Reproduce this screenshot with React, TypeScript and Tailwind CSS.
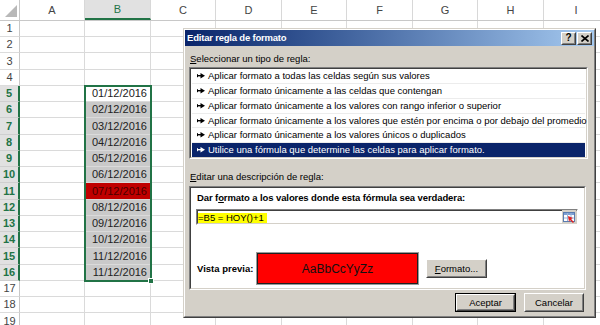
import React from "react";

const cols = ["A", "B", "C", "D", "E", "F", "G", "H", "I"];
const colCls = ["w-[65px]", "w-[66px]", "w-[65px]", "w-[66px]", "w-[65px]", "w-[66px]", "w-[65px]", "w-[66px]", "w-[65px]"];
const rowCls = ["h-[16px]", "h-[16px]", "h-[17px]", "h-[16px]"];

const dates: Record<number, string> = {
  5: "01/12/2016",
  6: "02/12/2016",
  7: "03/12/2016",
  8: "04/12/2016",
  9: "05/12/2016",
  10: "06/12/2016",
  11: "07/12/2016",
  12: "08/12/2016",
  13: "09/12/2016",
  14: "10/12/2016",
  15: "11/12/2016",
  16: "11/12/2016",
};

const items = [
  "Aplicar formato a todas las celdas según sus valores",
  "Aplicar formato únicamente a las celdas que contengan",
  "Aplicar formato únicamente a los valores con rango inferior o superior",
  "Aplicar formato únicamente a los valores que estén por encima o por debajo del promedio",
  "Aplicar formato únicamente a los valores únicos o duplicados",
  "Utilice una fórmula que determine las celdas para aplicar formato.",
];
const itemH = ["h-[15px]", "h-[15px]", "h-[15px]", "h-[14px]", "h-[15px]", "h-[14px]"];

function Arrow() {
  return (
    <svg width="8" height="6" viewBox="0 0 8 6" className="shrink-0">
      <rect x="0" y="2" width="4" height="1.4" fill="currentColor" />
      <rect x="0" y="1.2" width="1" height="3" fill="currentColor" />
      <polygon points="3.5,0 8,2.7 3.5,5.4" fill="currentColor" />
    </svg>
  );
}

function Raised({ className, children }: { className?: string; children?: React.ReactNode }) {
  return (
    <div className={"border border-t-white border-l-white border-r-[#404040] border-b-[#404040] bg-[#d4d0c8] " + (className ?? "")}>
      <div className="w-full h-full border border-t-[#d4d0c8] border-l-[#d4d0c8] border-r-[#808080] border-b-[#808080] flex items-center justify-center">
        {children}
      </div>
    </div>
  );
}

function Sunken({ className, innerClass, children }: { className?: string; innerClass?: string; children?: React.ReactNode }) {
  return (
    <div className={"border border-t-[#808080] border-l-[#808080] border-r-white border-b-white " + (className ?? "")}>
      <div className={"w-full h-full border border-t-[#404040] border-l-[#404040] border-r-[#d4d0c8] border-b-[#d4d0c8] bg-white " + (innerClass ?? "")}>
        {children}
      </div>
    </div>
  );
}

function CollapseIcon() {
  return (
    <svg width="14" height="14" viewBox="0 0 14 14">
      <rect x="0" y="0" width="14" height="14" fill="#d4d0c8" />
      <rect x="1.5" y="2.5" width="11" height="9" fill="#ffffff" stroke="#5a7cb0" strokeWidth="1" />
      <rect x="2" y="3" width="10" height="2" fill="#7b9fd4" />
      <line x1="5.5" y1="3" x2="5.5" y2="11" stroke="#9bb3d8" strokeWidth="1" />
      <line x1="9" y1="3" x2="9" y2="11" stroke="#9bb3d8" strokeWidth="1" />
      <line x1="2" y1="8" x2="12" y2="8" stroke="#9bb3d8" strokeWidth="1" />
      <polygon points="6,6 11,8 9,9 12,12 11,13 8,10 7,12" fill="#e02020" />
    </svg>
  );
}

function Spreadsheet() {
  const rows = Array.from({ length: 19 }, (_, i) => i + 1);
  return (
    <div className="flex flex-col w-[609px]">
      <div className="flex h-[21px] border-b border-[#c8c8c8]">
        <div className="w-[20px] h-full border-r border-[#c8c8c8] relative bg-white">
          <svg width="20" height="20" viewBox="0 0 20 20" className="absolute left-0 top-0">
            <polygon points="17,5 17,17 5,17" fill="#b8b8b8" />
          </svg>
        </div>
        {cols.map((c, i) => (
          <div
            key={c}
            className={
              colCls[i] +
              " h-full flex items-center justify-center border-r border-[#d8d8d8] text-[11px] " +
              (c === "B" ? "bg-[#e1e1e1] text-[#217346] border-b-2 border-b-[#217346]" : "bg-white text-[#444]")
            }
          >
            {c}
          </div>
        ))}
      </div>
      {rows.map((r) => {
        const sel = r >= 5 && r <= 16;
        return (
          <div key={r} className={"flex " + rowCls[(r - 1) % 4]}>
            <div
              className={
                "w-[20px] h-full flex items-center justify-center text-[11px] border-b " +
                (sel
                  ? "bg-[#e1e1e1] text-[#217346] font-bold border-r-2 border-r-[#217346] border-b-[#cfcfcf]"
                  : "bg-white text-[#444] border-r border-r-[#c8c8c8] border-b-[#dcdcdc]")
              }
            >
              {r}
            </div>
            {cols.map((c, i) => {
              const isB = c === "B" && sel;
              let bg = "bg-white";
              let txt = "text-[#222]";
              if (isB && r > 5) bg = "bg-[#c9c9c9]";
              if (isB && r === 11) {
                bg = "bg-[#c00000]";
                txt = "text-[#4a0000]";
              }
              return (
                <div
                  key={c}
                  className={colCls[i] + " h-full border-r border-b border-[#dadada] flex items-center justify-end pr-[3px] text-[11px] " + bg + " " + txt}
                >
                  {isB ? dates[r] : ""}
                </div>
              );
            })}
          </div>
        );
      })}
    </div>
  );
}

function Dialog() {
  return (
    <div className="absolute left-[183px] top-[28px] w-[413px] h-[290px] border border-t-[#d4d0c8] border-l-[#d4d0c8] border-r-[#404040] border-b-[#404040] bg-[#d4d0c8]">
      <div className="w-full h-full border border-t-white border-l-white border-r-[#808080] border-b-[#808080] flex flex-col text-[9.5px] leading-[12px] text-black">
        {/* title bar */}
        <div className="h-[16px] flex items-center bg-gradient-to-r from-[#0a246a] to-[#a6caf0] pl-[2px] pr-[2px]">
          <div className="flex-1 text-white font-bold tracking-[-0.2px]">Editar regla de formato</div>
          <Raised className="w-[15px] h-[13px]">
            <span className="font-bold text-[10px] leading-[10px]">?</span>
          </Raised>
          <Raised className="w-[15px] h-[13px] ml-[1px]">
            <svg width="8" height="7" viewBox="0 0 8 7">
              <path d="M0.5 0.5 L7.5 6.5 M7.5 0.5 L0.5 6.5" stroke="#000" strokeWidth="1.6" />
            </svg>
          </Raised>
        </div>
        {/* body */}
        <div className="flex flex-col pl-[4px] pr-[6px]">
          <div className="mt-[7px] h-[12px] pl-[1px]">
            <span className="underline">S</span>eleccionar un tipo de regla:
          </div>
          <Sunken className="mt-[2px] h-[92px]" innerClass="py-0 px-px">
            <div className="flex flex-col">
              {items.map((t, i) => (
                <div
                  key={i}
                  className={
                    itemH[i] +
                    " flex items-center gap-[3px] pl-[5px] " +
                    (i === 5 ? "bg-[#0a246a] text-white" : "border-b border-[#ececec]")
                  }
                >
                  <Arrow />
                  <span className="whitespace-nowrap">{t}</span>
                </div>
              ))}
            </div>
          </Sunken>
          <div className="mt-[12px] h-[12px] pl-[1px]">
            <span className="underline">E</span>ditar una descripción de regla:
          </div>
          <Sunken className="mt-[3px] h-[104px] w-[397px]" innerClass="flex flex-col pl-[5px] pr-[6px]">
            <div className="mt-[4px] h-[12px] font-bold pl-[1px] tracking-[-0.1px]">
              Dar f<span className="underline">o</span>rmato a los valores donde esta fórmula sea verdadera:
            </div>
            <Sunken className="mt-[5px] h-[16px]" innerClass="flex items-center">
              <div className="flex-1 flex items-center h-full">
                <span className="bg-[#ffff00] pr-[3px] h-[10px] leading-[10px] mt-[2px]">=B5 = HOY()+1</span>
              </div>
              <CollapseIcon />
            </Sunken>
            <div className="mt-[27px] flex items-center">
              <div className="w-[60px] font-bold pl-[1px]">Vista previa:</div>
              <div className="w-[163px] h-[33px] border border-[#9a9a9a]">
                <div className="w-full h-full border border-[#202020] bg-[#ff0000] flex items-center justify-center text-[12px] text-[#111]">
                  AaBbCcYyZz
                </div>
              </div>
              <Raised className="ml-[7px] w-[61px] h-[19px]">
                <span>
                  <span className="underline">F</span>ormato...
                </span>
              </Raised>
            </div>
          </Sunken>
          <div className="mt-[3px] flex justify-end pr-[4px] gap-[8px]">
            <div className="border border-black">
              <Raised className="w-[59px] h-[17px]">
                <span>Aceptar</span>
              </Raised>
            </div>
            <Raised className="w-[60px] h-[19px]">
              <span>Cancelar</span>
            </Raised>
          </div>
        </div>
      </div>
    </div>
  );
}

export default function App() {
  return (
    <div className="relative w-[600px] h-[325px] overflow-hidden bg-white font-['Liberation_Sans',Arial,sans-serif]">
      <Spreadsheet />
      {/* selection border B5:B16 */}
      <div className="absolute left-[84px] top-[85px] w-[68px] h-[197px] border-2 border-[#217346]" />
      <div className="absolute left-[148px] top-[278px] w-[6px] h-[6px] bg-[#217346] border border-white" />
      <Dialog />
    </div>
  );
}
